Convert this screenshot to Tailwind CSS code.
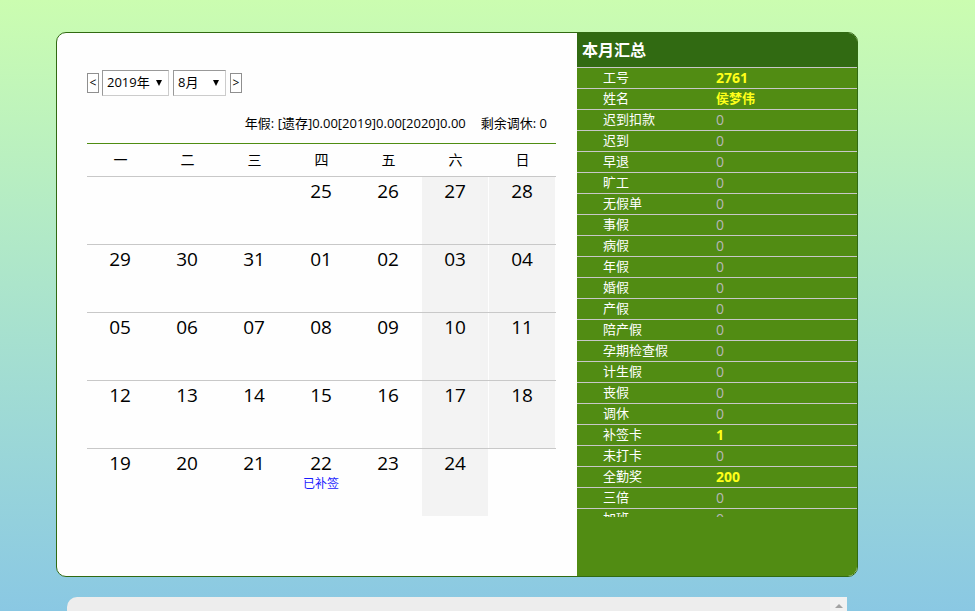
<!DOCTYPE html>
<html lang="zh-CN">
<head>
<meta charset="utf-8">
<meta name="viewport" content="width=device-width, initial-scale=1">
<title>考勤日历</title>
<script src="https://cdn.jsdelivr.net/npm/@tailwindcss/browser@4"></script>
</head>
<body class="flex h-screen flex-col gap-5 overflow-hidden bg-linear-to-b from-[#cbfdb0] to-[#8ac8e3] pt-8 pl-14 font-['Open_Sans','Noto_Sans_CJK_SC',sans-serif] text-black">

<main class="flex w-full max-w-[802px] shrink-0 overflow-hidden rounded-[10px] border border-[#316a12] bg-[#fefefe]">
  <section class="flex-1 pt-[37px] pr-[21px] pb-[60px] pl-[30px]">
    <form class="flex items-center gap-1 text-[13px]">
      <button type="button" aria-label="上个月" class="-mr-px flex h-5 w-3 items-center justify-center border border-[#8f8f8f] bg-white text-xs">&lt;</button>
      <div class="relative h-[26px] w-[67px]">
        <select aria-label="年份" class="size-full appearance-none border border-t-[#999] border-r-[#ccc] border-b-[#ccc] border-l-[#999] bg-white pl-1"><option>2019年</option></select>
        <svg class="pointer-events-none absolute top-[10px] right-[7px] h-[6px] w-[6px]" viewBox="0 0 6 6"><path d="M0 0h6L3 6z"/></svg>
      </div>
      <div class="relative h-[26px] w-[53px]">
        <select aria-label="月份" class="size-full appearance-none border border-t-[#999] border-r-[#ccc] border-b-[#ccc] border-l-[#999] bg-white pl-1"><option>8月</option></select>
        <svg class="pointer-events-none absolute top-[10px] right-[7px] h-[6px] w-[6px]" viewBox="0 0 6 6"><path d="M0 0h6L3 6z"/></svg>
      </div>
      <button type="button" aria-label="下个月" class="flex h-5 w-3 items-center justify-center border border-[#8f8f8f] bg-white text-xs">&gt;</button>
    </form>

    <p class="mt-[17px] flex h-[30px] justify-end gap-[15px] pr-[9px] text-[13px] leading-5"><span>年假: [遗存]0.00[2019]0.00[2020]0.00</span><span>剩余调休: 0</span></p>

    <table class="w-full table-fixed border-collapse text-center">
      <thead>
        <tr class="h-[33px] border-t border-b border-t-[#4f8d12] border-b-[#c8c8c8] text-sm">
          <th class="p-0 font-normal">一</th><th class="p-0 font-normal">二</th><th class="p-0 font-normal">三</th><th class="p-0 font-normal">四</th><th class="p-0 font-normal">五</th><th class="p-0 font-normal">六</th><th class="p-0 font-normal">日</th>
        </tr>
      </thead>
      <tbody id="days"></tbody>
    </table>
  </section>

  <aside class="w-[280px] bg-[#518c13] text-[13px] text-white">
    <h2 class="flex h-[34px] items-center bg-[#316a12] pl-[5px] text-base font-bold">本月汇总</h2>
    <div class="h-[450px] overflow-hidden">
      <table class="w-full table-fixed border-separate border-spacing-0 text-left">
        <colgroup><col class="w-[139px]"><col></colgroup>
        <tbody id="summary"></tbody>
      </table>
    </div>
  </aside>
</main>

<section aria-label="明细" class="ml-[11px] flex w-full max-w-[780px] flex-1 overflow-hidden rounded-tl-[10px] bg-[#ededed]">
  <div class="flex-1"></div>
  <div class="flex w-[17px] justify-center bg-[#f1f1f1] pt-[7px]">
    <svg class="h-1 w-2" viewBox="0 0 8 4"><path d="M0 4L4 0l4 4z" fill="#a3a3a3"/></svg>
  </div>
</section>

<script>
  const weeks = [
    ['', '', '', '25', '26', '27', '28'],
    ['29', '30', '31', '01', '02', '03', '04'],
    ['05', '06', '07', '08', '09', '10', '11'],
    ['12', '13', '14', '15', '16', '17', '18'],
    ['19', '20', '21', '22', '23', '24', '']
  ];
  document.getElementById('days').innerHTML = weeks.map((week, w) =>
    `<tr class="${w < 4 ? 'border-b' : ''} border-[#c8c8c8]">` + week.map((day, i) => {
      const weekend = i > 4 && day ? 'bg-[#f3f3f3]' : '';
      const note = w === 4 && day === '22' ? '<div class="text-xs leading-4 text-[#1a1aff]">已补签</div>' : '';
      return `<td class="p-0"><div class="mr-px h-[67px] pt-[2px] text-[19px] leading-[25px] ${weekend}">${day}${note}</div></td>`;
    }).join('') + '</tr>').join('');

  const summary = [
    ['工号', '2761'], ['姓名', '侯梦伟'], ['迟到扣款', '0'], ['迟到', '0'], ['早退', '0'], ['旷工', '0'],
    ['无假单', '0'], ['事假', '0'], ['病假', '0'], ['年假', '0'], ['婚假', '0'], ['产假', '0'], ['陪产假', '0'],
    ['孕期检查假', '0'], ['计生假', '0'], ['丧假', '0'], ['调休', '0'], ['补签卡', '1'], ['未打卡', '0'],
    ['全勤奖', '200'], ['三倍', '0'], ['加班', '0']
  ];
  document.getElementById('summary').innerHTML = summary.map(([name, value]) =>
    `<tr><th scope="row" class="h-[21px] border-t border-[#c8c8c8] p-0 pb-px pl-[26px] leading-[19px] font-normal">${name}</th>` +
    `<td class="h-[21px] border-t border-[#c8c8c8] p-0 pb-px leading-[19px] ${/^\d+$/.test(value) ? 'text-[14px]' : ''} ${value === '0' ? 'text-[#b8b8b8]' : 'font-bold text-[#ffff1a]'}">${value}</td></tr>`).join('');
</script>
</body>
</html>
